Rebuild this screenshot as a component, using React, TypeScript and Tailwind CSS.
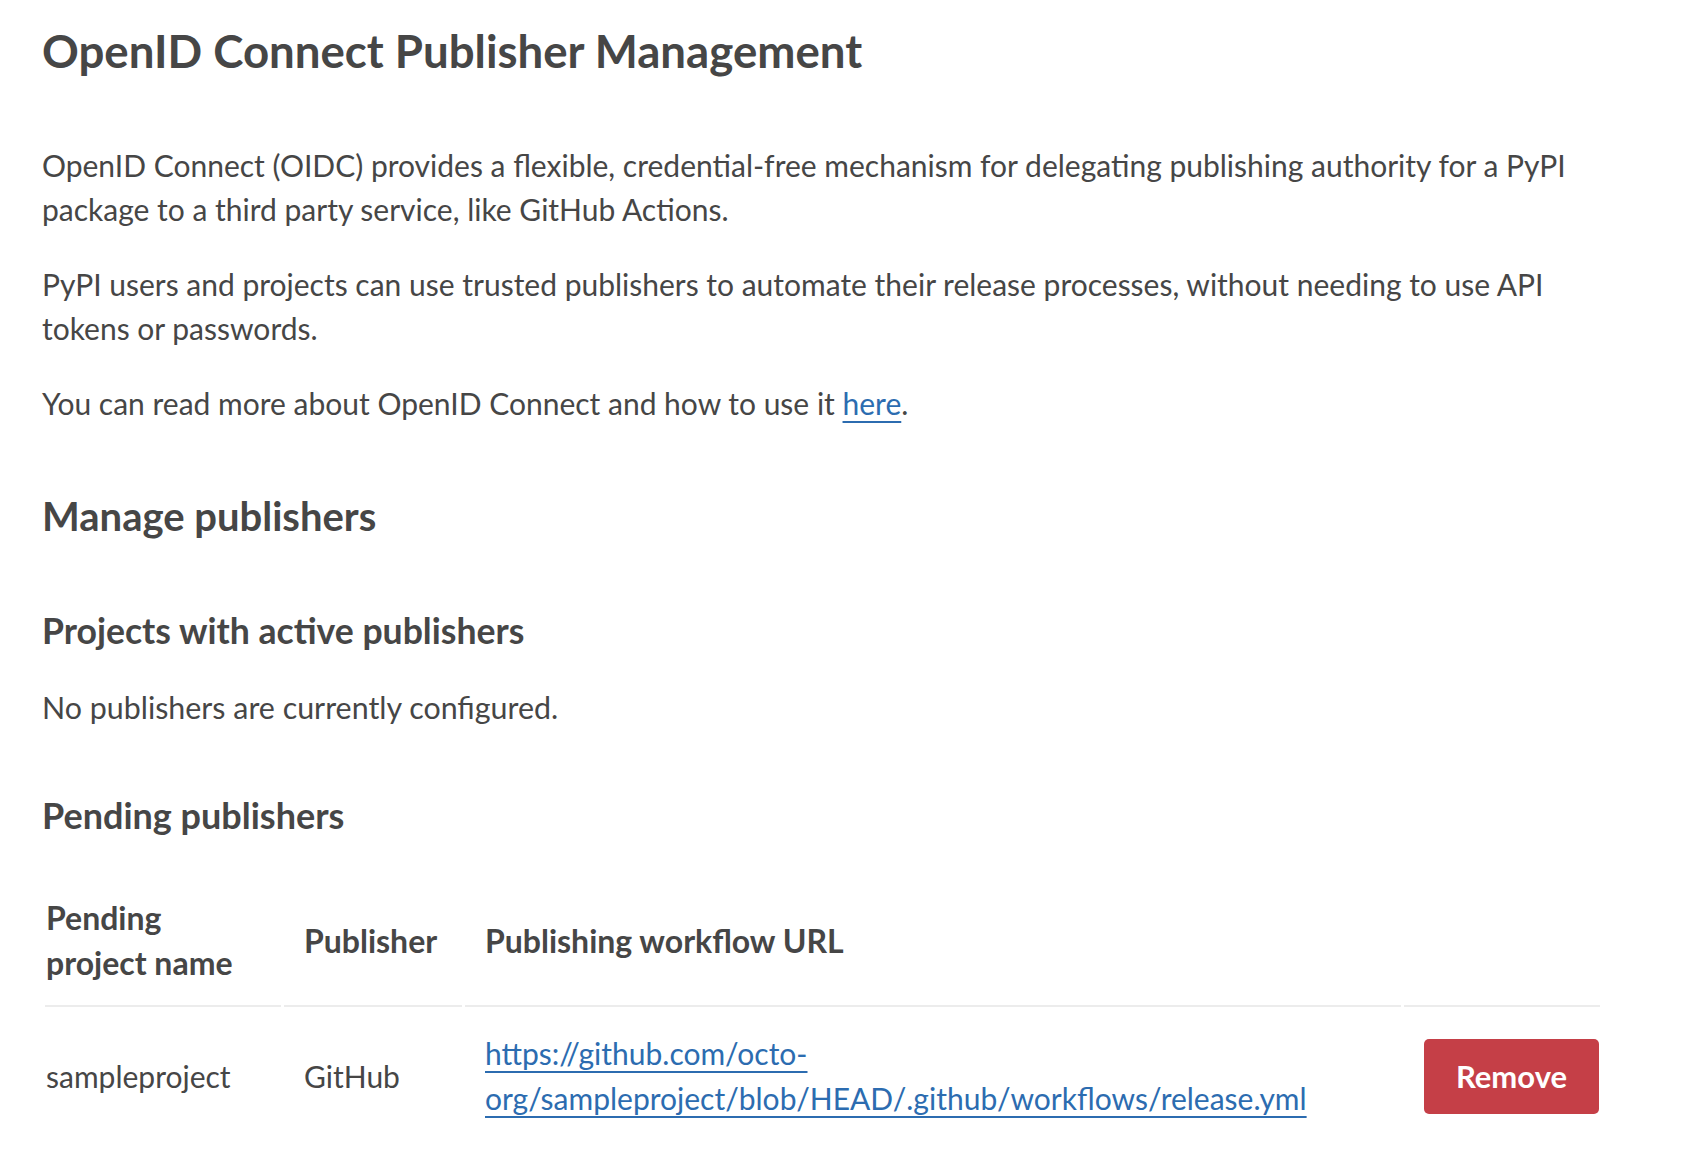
const font = { fontFamily: '"Lato", "Noto Sans", sans-serif' };

export default function App() {
    return (
        <div
            className="min-h-screen bg-white pl-[42px] pt-[26px] text-[#464646]"
            style={font}
        >
            <div className="w-[1561px]">
                <h1 className="text-[45.6px] font-bold leading-[50px]">
                    OpenID Connect Publisher Management
                </h1>

                <div className="mt-[67px] text-[30px] leading-[44.4px]">
                    <p className="mb-[30px]">
                        OpenID Connect (OIDC) provides a flexible, credential-free mechanism for delegating publishing
                        authority for a PyPI package to a third party service, like GitHub Actions.
                    </p>
                    <p className="mb-[30px]">
                        PyPI users and projects can use trusted publishers to automate their release processes, without
                        needing to use API tokens or passwords.
                    </p>
                    <p>
                        You can read more about OpenID Connect and how to use it{" "}
                        <a
                            href="#"
                            className="text-[#2c6cb0] underline decoration-2 underline-offset-[6px]"
                        >
                            here
                        </a>
                        .
                    </p>
                </div>

                <h2 className="mt-[68px] text-[40px] font-bold leading-[46px]">Manage publishers</h2>

                <h3 className="mt-[73px] text-[35.6px] font-bold leading-[37px]">Projects with active publishers</h3>
                <p className="mt-[36px] text-[30.4px] leading-[44.4px]">No publishers are currently configured.</p>

                <h3 className="mt-[68px] text-[36px] font-bold leading-[37px]">Pending publishers</h3>

                <table className="mt-[41px] w-full table-fixed border-separate border-spacing-x-[3px] border-spacing-y-0 text-left text-[30px] leading-[45px]">
                    <colgroup>
                        <col className="w-[236px]" />
                        <col className="w-[178px]" />
                        <col className="w-[936px]" />
                        <col className="w-[196px]" />
                    </colgroup>
                    <thead className="text-[32px]">
                        <tr>
                            <th className="border-b-2 border-[#ececec] py-5 pl-px pr-5 align-middle font-bold">
                                Pending project name
                            </th>
                            <th className="border-b-2 border-[#ececec] px-5 py-5 align-middle font-bold">Publisher</th>
                            <th className="border-b-2 border-[#ececec] px-5 py-5 align-middle font-bold">
                                Publishing workflow URL
                            </th>
                            <th className="border-b-2 border-[#ececec] py-5 pl-5 pr-0 align-middle" />
                        </tr>
                    </thead>
                    <tbody>
                        <tr>
                            <td className="pb-[22px] pl-px pr-5 pt-[24px] align-middle">sampleproject</td>
                            <td className="px-5 pb-[22px] pt-[24px] align-middle">GitHub</td>
                            <td className="px-5 pb-[22px] pt-[24px] align-middle">
                                <a
                                    href="#"
                                    className="text-[#2c6cb0] underline decoration-2 underline-offset-[6px]"
                                >
                                    https://github.com/octo-org/sampleproject/blob/HEAD/.github/workflows/release.yml
                                </a>
                            </td>
                            <td className="pb-[22px] pl-5 pr-0 pt-[24px] align-middle">
                                <button
                                    type="button"
                                    className="h-[75px] w-[175px] rounded-[5px] bg-[#c53f47] text-[31px] font-bold text-white"
                                >
                                    Remove
                                </button>
                            </td>
                        </tr>
                    </tbody>
                </table>
            </div>
        </div>
    );
}
